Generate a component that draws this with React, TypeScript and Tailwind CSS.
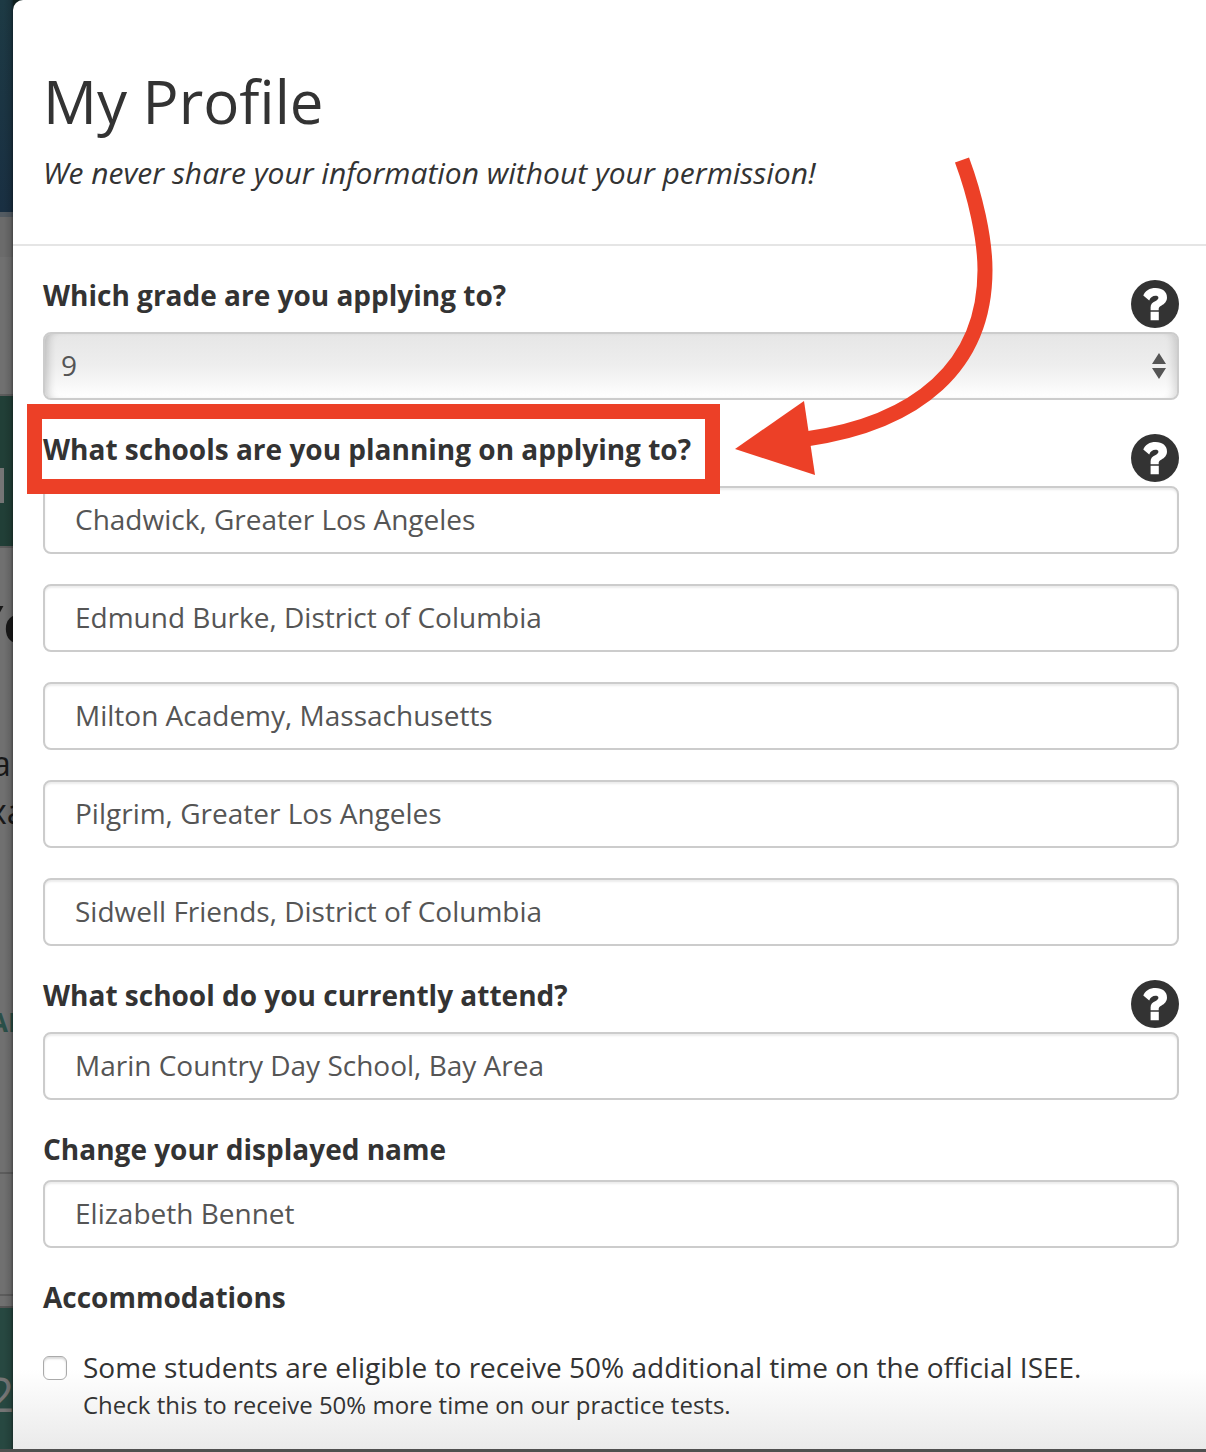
import { useState, type ReactNode } from "react";

function HelpButton({ label }: { label: string }) {
  return (
    <button type="button" aria-label={label} className="mt-1 size-12 shrink-0 cursor-pointer">
      <svg viewBox="0 0 48 48" className="size-12" aria-hidden="true">
        <circle cx="24" cy="24" r="24" fill="#333" />
        <path
          fill="#fff"
          d="M12.3 15.6C14.2 10.6 18.6 8 24.6 8C31.4 8 36 11.6 36 17.4C36 21.4 33.4 23.8 30.6 25.4C28.6 26.6 27.7 27.4 27.7 28.8V30.200H19.6V27.4C19.6 24 21.4 22.6 24.2 21.200C26.2 20.2 27.4 19.2 27.4 17.8C27.4 16.4 26.2 15.8 24.4 15.8C21.6 15.8 19.6 17.2 18.2 20.6ZM19.6 31.8H27.8V40.200H19.6Z"
        />
      </svg>
    </button>
  );
}

function FieldLabel({ htmlFor, children }: { htmlFor: string; children: ReactNode }) {
  return (
    <label htmlFor={htmlFor} className="text-[28px] leading-[38px] font-bold">
      {children}
    </label>
  );
}

function TextField({ id, value, label }: { id: string; value: string; label?: string }) {
  return (
    <input
      id={id}
      type="text"
      aria-label={label}
      defaultValue={value}
      className="block h-[68px] w-full rounded-lg border-2 border-[#ccc] bg-white px-[30px] pb-[2px] text-[28px] text-[#555] shadow-[inset_0_2px_2px_rgba(0,0,0,0.08)] outline-none"
    />
  );
}

/* The dimmed page that shows beside the dialog. */
function Backdrop() {
  return (
    <div
      aria-hidden="true"
      className="relative flex w-[13px] shrink-0 flex-col overflow-hidden bg-[#707070] whitespace-nowrap text-[#181818]"
    >
      <div className="h-[212px] bg-linear-to-b from-[#1d3a44] to-[#192f42]" />
      <div className="h-[5px] bg-[#535b62]" />
      <div className="h-10 bg-[#6b6b6b]" />
      <div className="mt-[137px] flex h-[154px] items-center border-y-2 border-[#5c5c5c] bg-[#213f37]">
        <div className="mt-7 h-[35px] w-1 bg-[#757575]" />
      </div>
      <div className="mt-[45px] ml-[-29px] text-[52px] leading-[60px] font-bold">Yo</div>
      <div className="mt-[86px] ml-[-8px] text-[34px] leading-12">a</div>
      <div className="ml-[-11px] text-[34px] leading-12">xa</div>
      <div className="mt-[167px] ml-[-10px] text-[26px] leading-10 font-bold text-[#2a4f48]">AI</div>
      <div className="mt-[130px] h-[124px] border-y-2 border-[#5c5c5c]" />
      <div className="mt-[10px] grow border-t-2 border-[#555] bg-[#274841] pt-[52px] text-[48px] leading-[68px] text-[#757575]">
        <div className="ml-[-13px]">2</div>
      </div>
      <div className="absolute inset-0 bg-linear-to-r from-transparent from-30% via-black/12 via-80% to-black/35" />
    </div>
  );
}

/* Red frame and arrow drawn over the form. */
function Annotation() {
  return (
    <>
      <div className="pointer-events-none absolute -top-[26px] -left-4 h-[90px] w-[693px] border-[15px] border-[#ec4027]" />
      <svg
        viewBox="0 0 270 330"
        className="pointer-events-none absolute -top-[280px] left-[687px] h-[330px] w-[270px]"
        aria-hidden="true"
      >
        <path
          d="M232 10C245 45 255 88 255 120C255 216 188 273 76 289"
          fill="none"
          stroke="#ec4027"
          strokeWidth="15"
        />
        <path d="M5 299L74 251L85 325Z" fill="#ec4027" />
      </svg>
    </>
  );
}

const schools = [
  "Chadwick, Greater Los Angeles",
  "Edmund Burke, District of Columbia",
  "Milton Academy, Massachusetts",
  "Pilgrim, Greater Los Angeles",
  "Sidwell Friends, District of Columbia",
];

export default function App() {
  const [grade, setGrade] = useState("9");
  return (
    <div className="bg-[#4f4f4f] pb-[3px] font-['Open_Sans',sans-serif] text-[#333]">
      <div className="flex bg-[#10201f]">
        <Backdrop />
        <main className="min-w-0 flex-1 rounded-tl-[10px] bg-white">
          <header className="border-b-2 border-[#e5e5e5] px-[30px] pt-[60px] pb-[51px]">
            <h1 className="text-[60px] leading-[82px]">My Profile</h1>
            <p className="mt-[11px] text-[30px] leading-10 italic">
              We never share your information without your permission!
            </p>
          </header>

          <form className="pt-[30px]">
            <div className="flex flex-col gap-[30px] pr-[27px] pl-[30px]">
              <div>
                <div className="flex h-14 items-start justify-between">
                  <FieldLabel htmlFor="grade">Which grade are you applying to?</FieldLabel>
                  <HelpButton label="Help about grade" />
                </div>
                <div className="relative">
                  <select
                    id="grade"
                    value={grade}
                    onChange={(e) => setGrade(e.target.value)}
                    className="block h-[68px] w-full appearance-none rounded-lg border-2 border-[#ccc] bg-linear-to-b from-[#e6e6e6] via-[#eee] via-50% to-white px-4 pb-[2px] text-[28px] text-[#555] shadow-[inset_9px_0_8px_-6px_rgba(0,0,0,0.2),inset_-9px_0_8px_-6px_rgba(0,0,0,0.14)] outline-none"
                  >
                    <option>8</option>
                    <option>9</option>
                    <option>10</option>
                  </select>
                  <svg
                    viewBox="0 0 14 26"
                    className="pointer-events-none absolute top-[21px] right-[13px] h-[26px] w-[14px]"
                    aria-hidden="true"
                  >
                    <path d="M7 0L14 11H0ZM0 15H14L7 26Z" fill="#555" />
                  </svg>
                </div>
              </div>

              <div className="relative">
                <div className="flex h-14 items-start justify-between">
                  <FieldLabel htmlFor="school-0">What schools are you planning on applying to?</FieldLabel>
                  <HelpButton label="Help about planned schools" />
                </div>
                <div className="flex flex-col gap-[30px]">
                  {schools.map((school, i) => (
                    <TextField
                      key={school}
                      id={`school-${i}`}
                      value={school}
                      label={i > 0 ? `Planned school ${i + 1}` : undefined}
                    />
                  ))}
                </div>
                <Annotation />
              </div>

              <div>
                <div className="flex h-14 items-start justify-between">
                  <FieldLabel htmlFor="current-school">What school do you currently attend?</FieldLabel>
                  <HelpButton label="Help about current school" />
                </div>
                <TextField id="current-school" value="Marin Country Day School, Bay Area" />
              </div>

              <div>
                <div className="flex h-[50px] items-start">
                  <FieldLabel htmlFor="display-name">Change your displayed name</FieldLabel>
                </div>
                <TextField id="display-name" value="Elizabeth Bennet" />
              </div>

              <h2 className="text-[28px] leading-[38px] font-bold">Accommodations</h2>
            </div>

            <div className="flex items-start gap-4 bg-linear-to-b from-white from-40% to-[#eaeaea] pt-8 pr-[27px] pb-[25px] pl-[30px]">
              <input
                id="extra-time"
                type="checkbox"
                className="mt-2 size-6 shrink-0 appearance-none rounded-md border border-[#aaa] bg-white shadow-[inset_0_2px_2px_rgba(0,0,0,0.15)] checked:bg-[#333]"
              />
              <label htmlFor="extra-time" className="text-[28px] leading-[38px]">
                Some students are eligible to receive 50% additional time on the official ISEE.
                <small className="block text-[24px] leading-[38px]">
                  Check this to receive 50% more time on our practice tests.
                </small>
              </label>
            </div>
          </form>
        </main>
      </div>
    </div>
  );
}
